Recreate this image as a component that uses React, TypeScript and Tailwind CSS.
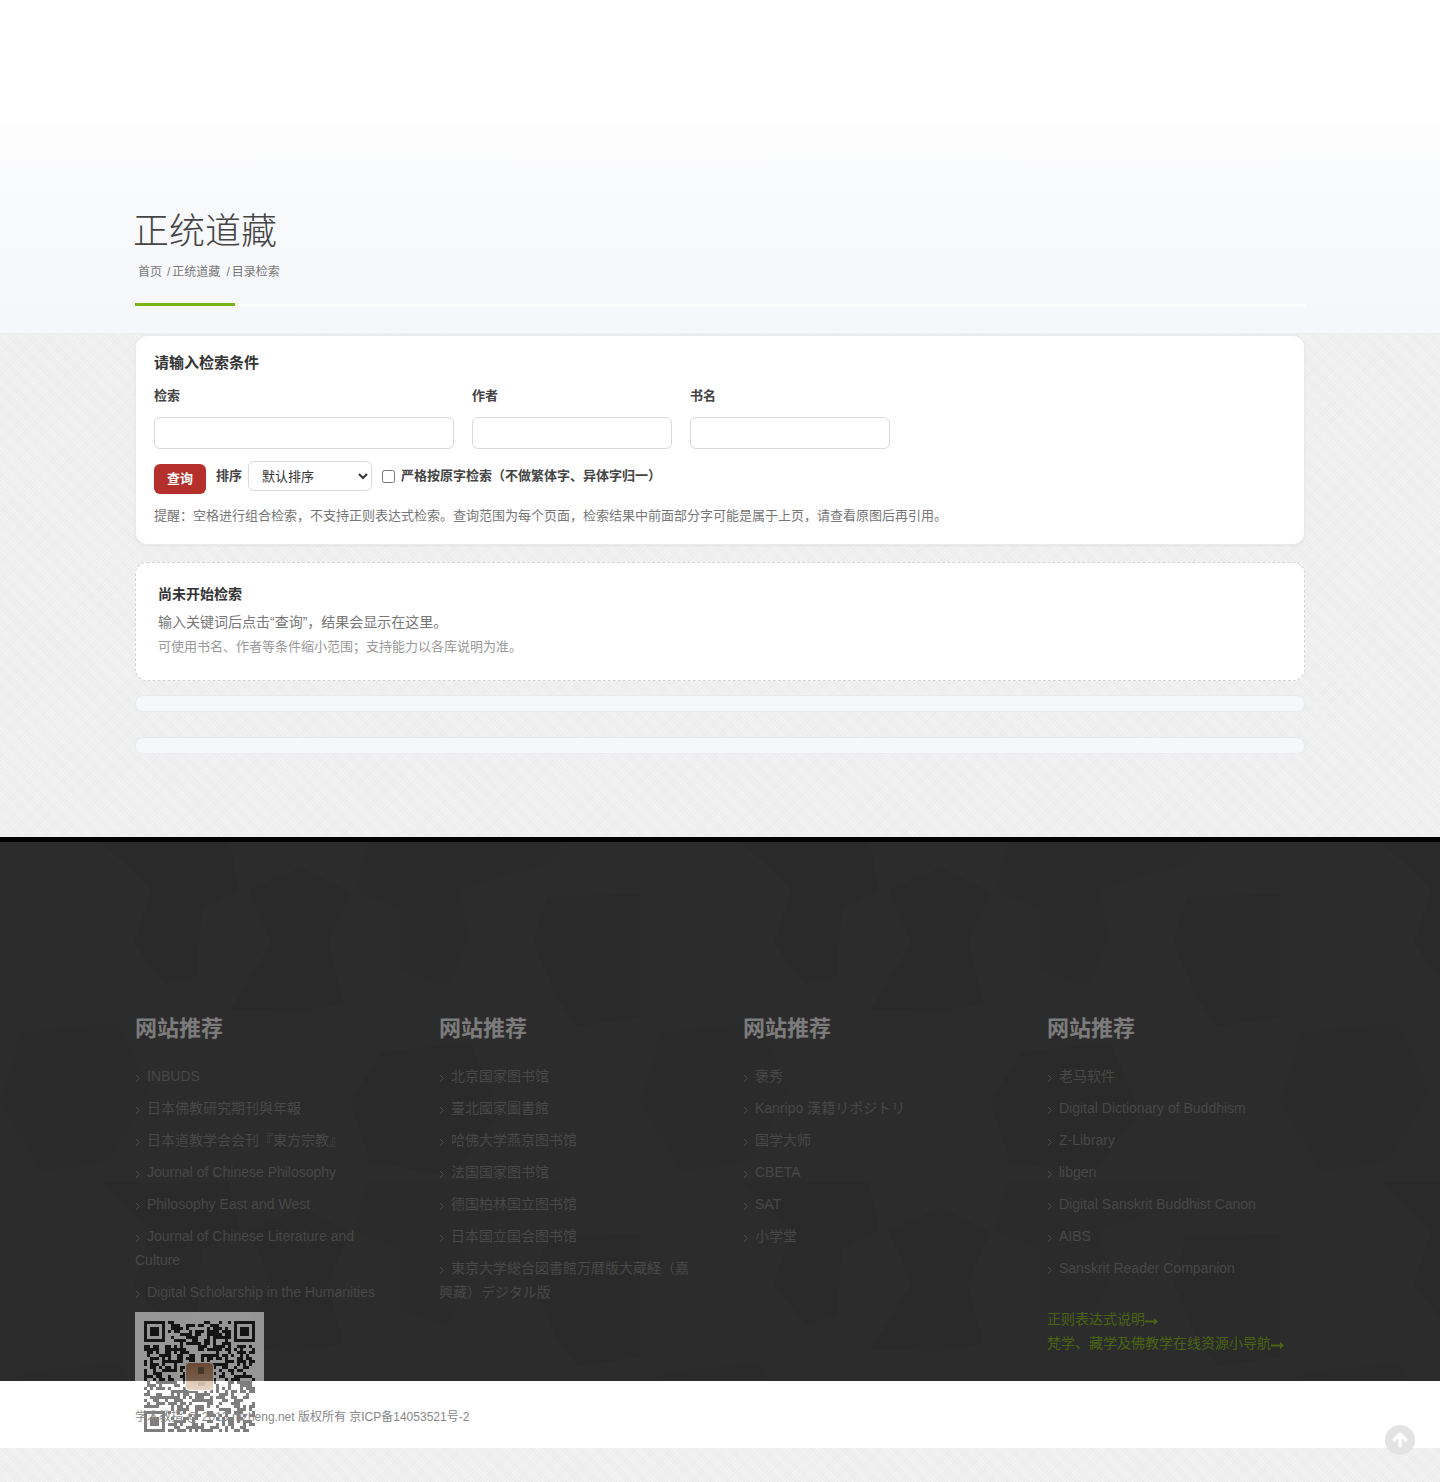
import React from "react";
import { ArrowUp } from "lucide-react";

const columns = [
  [
    "INBUDS",
    "日本佛教研究期刊與年報",
    "日本道教学会会刊『東方宗教』",
    "Journal of Chinese Philosophy",
    "Philosophy East and West",
    "Journal of Chinese Literature and Culture",
    "Digital Scholarship in the Humanities",
  ],
  [
    "北京国家图书馆",
    "臺北國家圖書館",
    "哈佛大学燕京图书馆",
    "法国国家图书馆",
    "德国柏林国立图书馆",
    "日本国立国会图书馆",
    "東京大学総合図書館万暦版大蔵経（嘉興藏）デジタル版",
  ],
  ["褒秀", "Kanripo 漢籍リポジトリ", "国学大师", "CBETA", "SAT", "小学堂"],
  [
    "老马软件",
    "Digital Dictionary of Buddhism",
    "Z-Library",
    "libgen",
    "Digital Sanskrit Buddhist Canon",
    "AIBS",
    "Sanskrit Reader Companion",
  ],
];

// footer backdrop, faint polygons that repeat
function FooterShapes() {
  return (
    <svg className="absolute inset-0 w-full h-full" aria-hidden="true">
      <defs>
        <pattern id="shapes" x="0" y="0" width="640" height="340" patternUnits="userSpaceOnUse">
          <polygon fill="#2a2a2a" points="101,0 230,0 239,48 202,68 197,135 165,143 133,101 151,48" />
          <polygon fill="#2a2a2a" points="301,25 351,50 328,101 344,161 303,170 230,168 271,101 248,48" />
          <polygon fill="#2b2b2b" points="367,0 565,0 551,21 459,48 471,95 448,146 399,128 399,68 354,50" />
          <polygon fill="#2a2a2a" points="546,55 640,51 640,175 578,185 556,155 533,101" />
          <polygon fill="#2b2b2b" points="20,190 120,180 150,250 110,320 40,330 0,260" />
          <polygon fill="#2a2a2a" points="380,210 470,200 500,270 450,335 370,320 350,260" />
        </pattern>
      </defs>
      <rect width="100%" height="100%" fill="url(#shapes)" />
    </svg>
  );
}

function buildQr() {
  const size = 37;
  let seed = 73;
  const cells: boolean[][] = [];
  for (let y = 0; y < size; y++) {
    const row: boolean[] = [];
    for (let x = 0; x < size; x++) {
      seed = (seed * 1103515245 + 12345) & 0x7fffffff;
      row.push(((seed >> 16) & 3) < 2);
    }
    cells.push(row);
  }
  const finder = (ox: number, oy: number) => {
    for (let y = -1; y < 8; y++) {
      for (let x = -1; x < 8; x++) {
        const cx = ox + x;
        const cy = oy + y;
        if (cx < 0 || cy < 0 || cx >= size || cy >= size) continue;
        const ring = x === 0 || x === 6 || y === 0 || y === 6;
        const core = x >= 2 && x <= 4 && y >= 2 && y <= 4;
        const inside = x >= 0 && x <= 6 && y >= 0 && y <= 6;
        cells[cy][cx] = inside && (ring || core);
      }
    }
  };
  finder(0, 0);
  finder(size - 7, 0);
  finder(0, size - 7);
  return cells;
}

function QrCode() {
  const cells = buildQr();
  return (
    <svg width="129" height="129" viewBox="0 0 129 129" className="relative z-10 block opacity-50">
      <defs>
        <linearGradient id="seal" x1="0" y1="0" x2="0" y2="1">
          <stop offset="0" stopColor="#a8683a" />
          <stop offset="1" stopColor="#d0ab88" />
        </linearGradient>
      </defs>
      <rect width="129" height="129" fill="#fff" />
      {cells.map((row, y) =>
        row.map((on, x) =>
          on ? <rect key={`${x}-${y}`} x={9 + x * 3} y={9 + y * 3} width="3" height="3" fill="#000" /> : null
        )
      )}
      <rect x="50" y="50" width="29" height="29" rx="5" fill="#fff" />
      <rect x="51" y="51" width="27" height="27" rx="4" fill="url(#seal)" />
      <rect x="63" y="55" width="6" height="7" rx="1" fill="#5a4028" />
      <rect x="63" y="70" width="7" height="4" rx="1" fill="#9a7a5c" />
    </svg>
  );
}

function Arrow() {
  return (
    <svg width="13" height="7" viewBox="0 0 13 7" className="inline-block align-[-1px]" aria-hidden="true">
      <path d="M0 2.5h9V0l4 3.5L9 7V4.5H0z" fill="#4a6412" />
    </svg>
  );
}

function Chevron() {
  return (
    <svg width="12" height="9" viewBox="0 0 12 9" className="inline-block align-[-2px]" aria-hidden="true">
      <path d="M1 1l3.5 3.5L1 8" fill="none" stroke="#505050" strokeWidth="1" />
    </svg>
  );
}

export default function App() {
  return (
    <div
      className="min-h-[1482px] bg-[#f3f3f3] bg-[repeating-linear-gradient(45deg,rgba(0,0,0,0.018)_0,rgba(0,0,0,0.018)_1px,transparent_1px,transparent_2px),repeating-linear-gradient(-45deg,rgba(0,0,0,0.014)_0,rgba(0,0,0,0.014)_1px,transparent_1px,transparent_3px)] text-[13px] text-[#444]"
      style={{ fontFamily: '"Liberation Sans", "Noto Sans CJK SC", sans-serif' }}
    >
      {/* Nav placeholder */}
      <div className="h-[122px] bg-white" />

      {/* Page title */}
      <section className="h-[212px] bg-gradient-to-b from-[#fefefe] via-[#f8f9fb] via-40% to-[#f5f7fa] border-b border-[#eceef1] pt-[88px]">
        <div className="w-[1170px] mx-auto">
          <h1 className="-ml-[2px] text-[36px] leading-[44px] font-light text-[#444]">正统道藏</h1>
          <div className="flex pl-[3px] mt-[9px] text-[12px] leading-[18px] text-[#777]">
            <span>首页</span>
            <span className="ml-[5px]">/</span>
            <span className="ml-[2px]">正统道藏</span>
            <span className="ml-[6px]">/</span>
            <span className="ml-[2px]">目录检索</span>
          </div>
          <div className="flex items-center mt-[22px]">
            <div className="w-[100px] h-[3px] bg-[#7ab317]" />
            <div className="flex-1 h-[2px] bg-white" />
          </div>
        </div>
      </section>

      <main className="w-[1170px] mx-auto h-[503px] pt-px">
        {/* Search form */}
        <div className="h-[210px] bg-white rounded-xl border border-[#e8eaed] shadow-[0_1px_3px_rgba(0,0,0,0.05)] px-[18px] pt-[17px]">
          <div className="text-[15px] leading-5 font-bold text-[#333]">请输入检索条件</div>
          <div className="flex gap-[18px] mt-[13px]">
            <label className="w-[300px] block">
              <span className="block font-bold leading-5 text-[#444]">检索</span>
              <input className="block w-full h-8 mt-[11px] rounded-md border border-[#d8dadd] bg-white" />
            </label>
            <label className="w-[200px] block">
              <span className="block font-bold leading-5 text-[#444]">作者</span>
              <input className="block w-full h-8 mt-[11px] rounded-md border border-[#d8dadd] bg-white" />
            </label>
            <label className="w-[200px] block">
              <span className="block font-bold leading-5 text-[#444]">书名</span>
              <input className="block w-full h-8 mt-[11px] rounded-md border border-[#d8dadd] bg-white" />
            </label>
          </div>
          <div className="flex items-start mt-3">
            <button className="w-[52px] h-[30px] mt-[3px] pb-px rounded-md bg-[#b5302a] text-white font-bold">查询</button>
            <span className="ml-[10px] font-bold leading-[30px]">排序</span>
            <select className="w-[124px] h-[30px] ml-[6px] pl-[9px] rounded-md border border-[#d8dadd] bg-white text-[#333]">
              <option>默认排序</option>
            </select>
            <label className="flex items-center h-[30px] ml-[10px] font-bold">
              <input type="checkbox" className="w-[13px] h-[13px] m-0" />
              <span className="ml-[6px]">严格按原字检索（不做繁体字、异体字归一）</span>
            </label>
          </div>
          <p className="mt-[12px] leading-5 text-[#777]">
            提醒：空格进行组合检索，不支持正则表达式检索。查询范围为每个页面，检索结果中前面部分字可能是属于上页，请查看原图后再引用。
          </p>
        </div>

        {/* Empty state */}
        <div className="mt-[17px] h-[119px] bg-white rounded-xl border border-dashed border-[#d5d5d5] px-[22px] pt-[21px]">
          <div className="text-[14px] font-bold leading-5 text-[#333]">尚未开始检索</div>
          <div className="mt-2 text-[14px] leading-5 text-[#777]">输入关键词后点击“查询”，结果会显示在这里。</div>
          <div className="mt-[5px] leading-5 text-[#999]">可使用书名、作者等条件缩小范围；支持能力以各库说明为准。</div>
        </div>

        <div className="mt-[14px] h-[17px] rounded-lg bg-[#f5f7fa] border border-[#e8ebef]" />
        <div className="mt-[25px] h-[17px] rounded-lg bg-[#f5f7fa] border border-[#e8ebef]" />
      </main>

      {/* Footer */}
      <footer className="relative h-[544px] bg-[#2c2c2c] border-t-[5px] border-black">
        <FooterShapes />
        <div className="relative w-[1170px] mx-auto pt-[171px] grid grid-cols-[repeat(4,260px)] gap-x-[44px] items-start">
          {columns.map((items, i) => (
            <div key={i}>
              <h3 className="text-[22px] leading-[32px] font-bold text-[#7c7c7c]">网站推荐</h3>
              <ul className="mt-[19px]">
                {items.map((item) => (
                  <li key={item} className="mb-2 text-[14px] leading-6 text-[#484848]">
                    <Chevron />
                    {item}
                  </li>
                ))}
              </ul>
              {i === 0 && <QrCode />}
              {i === 3 && (
                <div className="mt-[27px] text-[14px] leading-6 text-[#4a6412]">
                  <div>
                    正则表达式说明
                    <Arrow />
                  </div>
                  <div>
                    梵学、藏学及佛教学在线资源小导航
                    <Arrow />
                  </div>
                </div>
              )}
            </div>
          ))}
        </div>
      </footer>

      {/* Copyright bar */}
      <div className="h-[67px] bg-white">
        <div className="relative z-20 w-[1170px] mx-auto pt-[27px] text-[12px] leading-[18px] text-[#888]">
          学术教指 @ 2013 mzheng.net 版权所有 京ICP备14053521号-2
        </div>
      </div>

      {/* Back to top */}
      <button className="fixed right-[25px] bottom-[27px] z-30 w-[30px] h-[30px] rounded-full bg-[#e3e3e3] flex items-center justify-center">
        <ArrowUp size={20} strokeWidth={4} className="text-white" />
      </button>
    </div>
  );
}
